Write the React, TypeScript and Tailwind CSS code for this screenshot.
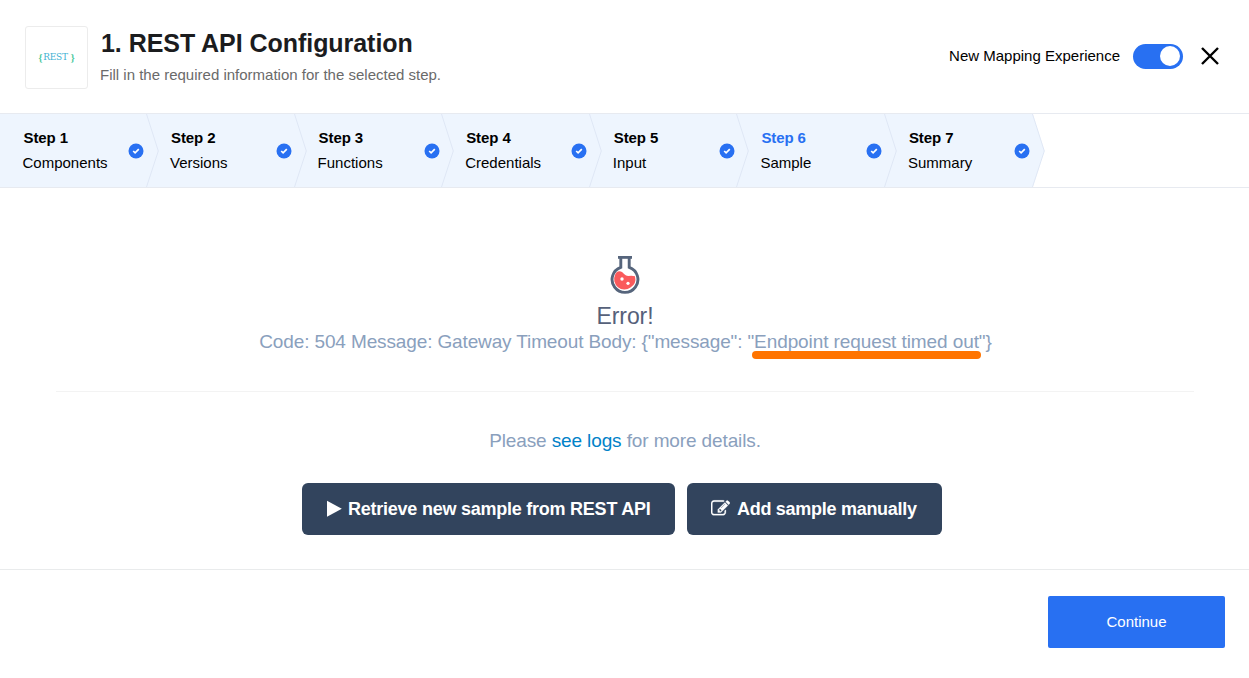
const steps = ['Components', 'Versions', 'Functions', 'Credentials', 'Input', 'Sample', 'Summary'];

function CheckBadge() {
  return (
    <svg width="16" height="16" viewBox="0 0 16 16" className="block">
      <circle cx="8" cy="8" r="7.5" fill="#2870f2" />
      <path d="M5.2 8l1.9 1.9 3.7-3.7" fill="none" stroke="#fff" strokeWidth="1.7" />
    </svg>
  );
}

function Step({ index, name }: { index: number; name: string }) {
  const first = index === 0;
  return (
    <div
      className={
        'relative flex h-[73px] shrink-0 items-center justify-between bg-[#eef5fe] pr-[1.6px] ' +
        (first ? 'w-[146px] pl-[22.5px]' : 'w-[147.6px] pl-[24px]')
      }
    >
      <div className="pb-px text-[15px] leading-[25px] text-black">
        <div className={'pl-px font-bold tracking-[-0.1px] ' + (index === 5 ? 'text-[#2870f2]' : '')}>Step {index + 1}</div>
        <div>{name}</div>
      </div>
      <CheckBadge />
      <svg width="13" height="73" viewBox="0 0 13 73" className="absolute top-0 left-full z-10">
        <path d="M0 0H0.5L12.3 37L0.5 73H0z" fill="#eef5fe" />
        <path d="M0.5 0L12.3 37L0.5 73" fill="none" stroke="#dfe7f5" />
      </svg>
    </div>
  );
}

export default function App() {
  return (
    <div className="flex h-[678px] w-[1249px] flex-col overflow-hidden bg-white font-['Liberation_Sans',Arial,sans-serif]">
      <header className="flex h-[113px] items-start pr-[29px] pl-[25px]">
        <div className="mt-[26px] flex h-[63px] w-[63px] items-center justify-center rounded-[3px] border border-[#ececec] pt-px font-['DejaVu_Serif',serif] text-[#3fb2d3]">
          <span className="-mt-px font-['Liberation_Serif',serif] text-[10px] font-bold text-[#45c79a]">{'{'}</span>
          <span className="pr-[3px] pl-[1px] text-[9px] tracking-[-0.3px]">REST</span>
          <span className="-mt-px font-['Liberation_Serif',serif] text-[10px] font-bold text-[#45c79a]">{'}'}</span>
        </div>
        <div className="mt-[27px] ml-3 flex-1">
          <h1 className="pl-px text-[25px] leading-[32px] font-bold tracking-[-0.05px] text-[#1b1c1e]">1. REST API Configuration</h1>
          <p className="mt-[7px] text-[15px] leading-[18px] text-[#6a6a6a]">Fill in the required information for the selected step.</p>
        </div>
        <div className="mt-[44px] flex items-center">
          <span className="text-[15px] text-black">New Mapping Experience</span>
          <div className="ml-[13px] flex h-[25px] w-[50px] items-center justify-end rounded-full bg-[#2870f2] pr-[3px]">
            <div className="-mt-px h-5 w-5 rounded-full bg-white" />
          </div>
          <svg width="20" height="20" viewBox="0 0 20 20" className="-mt-px ml-[17px]">
            <path d="M2 2L18 18M18 2L2 18" stroke="#000" strokeWidth="2.4" />
          </svg>
        </div>
      </header>
      <nav className="flex h-[75px] border-y border-[#e7eaf0]">
        {steps.map((name, i) => (
          <Step key={name} index={i} name={name} />
        ))}
      </nav>
      <main className="flex h-[381px] flex-col items-center">
        <svg width="30" height="40" viewBox="0 0 30 40" className="mt-[67px]">
          <path d="M10.8 2V12.3A12.9 12.9 0 1 0 19.2 12.3V2" fill="#fff" stroke="#56657c" strokeWidth="2.9" />
          <path d="M8 2.4H22" stroke="#56657c" strokeWidth="2.8" />
          <path d="M5 20Q6 16.2 9.5 16.2C13.5 16.2 14 21 18.5 21Q22 20.6 25 21.2A10.3 10.3 0 0 1 20.5 32.5A10.3 10.3 0 0 1 5 20z" fill="#fa5a5c" />
          <circle cx="12" cy="24" r="1.7" fill="#fff" />
          <circle cx="18" cy="28.3" r="1.6" fill="#fff" />
        </svg>
        <h2 className="mt-[7px] mb-[-1px] pl-px text-[23px] leading-[28px] tracking-[-0.1px] text-[#56617a]">Error!</h2>
        <p className="flex pl-[2px] text-[19px] leading-[26px] tracking-[-0.13px] whitespace-pre text-[#8aa0bd]">
          {'Code: 504 Message: Gateway Timeout Body: {"message": "'}
          <span className="relative tracking-[-0.09px]">
            Endpoint request timed out
            <span className="absolute top-[22px] -left-[2px] h-2 w-[229px] rounded-full bg-[#ff7400]" />
          </span>
          {'"}'}
        </p>
        <div className="mt-[36px] h-px w-[1138px] bg-[#f3f3f3]" />
        <p className="mt-[36px] pl-px text-[19px] leading-[26px] tracking-[-0.12px] text-[#8aa0bd]">
          Please <a className="text-[#0082c8]">see logs</a> for more details.
        </p>
        <div className="mt-[29px] flex gap-3 pr-[5px]">
          <button className="flex h-[52px] w-[373px] items-center rounded-[6px] bg-[#32445d] pl-6 text-[18px] font-bold tracking-[-0.24px] whitespace-nowrap text-white">
            <svg width="16" height="18" viewBox="0 0 16 18" className="mr-[6px]">
              <path d="M1 0.8L15.8 8.8L1 16.8z" fill="#fff" />
            </svg>
            Retrieve new sample from REST API
          </button>
          <button className="flex h-[52px] w-[255px] items-center rounded-[6px] bg-[#32445d] pl-6 text-[18px] font-bold tracking-[-0.28px] whitespace-nowrap text-white">
            <svg width="19" height="19" viewBox="0 0 1792 1792" className="mr-[7px] -mt-[2px]" fill="#fff" stroke="#fff" strokeWidth="25">
              <path d="M888 1184l116-116-152-152-116 116v56h96v96h56zm440-720q-16-16-33 1l-350 350q-17 17-1 33t33-1l350-350q17-17 1-33zm80 594v190q0 119-84.5 203.5t-203.5 84.5h-832q-119 0-203.5-84.5t-84.5-203.5v-832q0-119 84.5-203.5t203.5-84.5h832q63 0 117 25 15 7 18 23 3 17-9 29l-49 49q-14 14-32 8-23-6-45-6h-832q-66 0-113 47t-47 113v832q0 66 47 113t113 47h832q66 0 113-47t47-113v-126q0-13 9-22l64-64q15-15 35-7t20 29zm-96-738l288 288-672 672h-288v-288zm444 132l-92 92-288-288 92-92q28-28 68-28t68 28l152 152q28 28 28 68t-28 68z" />
            </svg>
            Add sample manually
          </button>
        </div>
      </main>
      <footer className="flex flex-1 items-start justify-end border-t border-[#e9ebec] pt-[26px] pr-6">
        <button className="h-[52px] w-[177px] rounded-[2px] bg-[#2870f2] text-[15px] text-white">Continue</button>
      </footer>
    </div>
  );
}
